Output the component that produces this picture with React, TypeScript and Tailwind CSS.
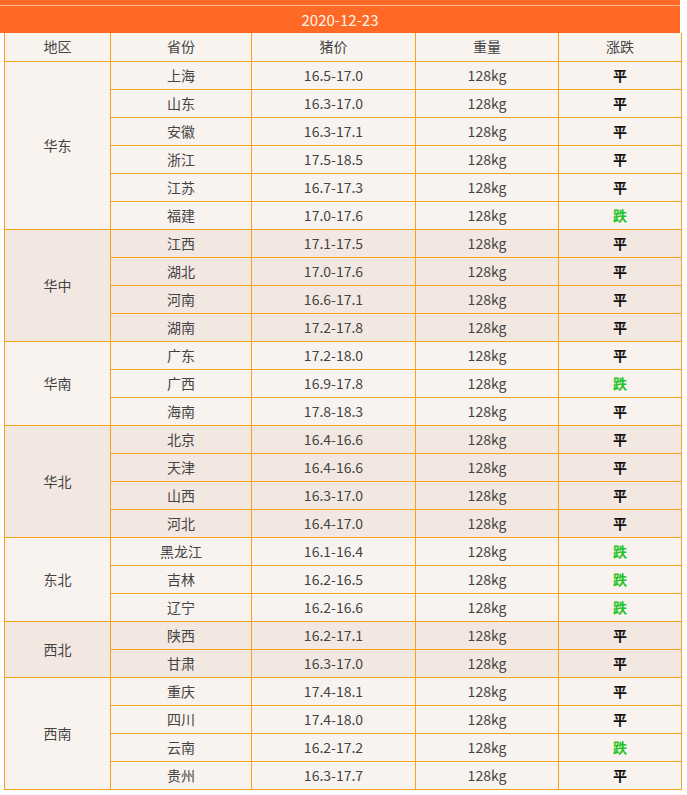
import React from 'react'

type Row = { province: string; price: string; trend: '平' | '跌' }
type Region = { name: string; shaded: boolean; rows: Row[] }

const regions: Region[] = [
  {
    name: '华东',
    shaded: false,
    rows: [
      { province: '上海', price: '16.5-17.0', trend: '平' },
      { province: '山东', price: '16.3-17.0', trend: '平' },
      { province: '安徽', price: '16.3-17.1', trend: '平' },
      { province: '浙江', price: '17.5-18.5', trend: '平' },
      { province: '江苏', price: '16.7-17.3', trend: '平' },
      { province: '福建', price: '17.0-17.6', trend: '跌' },
    ],
  },
  {
    name: '华中',
    shaded: true,
    rows: [
      { province: '江西', price: '17.1-17.5', trend: '平' },
      { province: '湖北', price: '17.0-17.6', trend: '平' },
      { province: '河南', price: '16.6-17.1', trend: '平' },
      { province: '湖南', price: '17.2-17.8', trend: '平' },
    ],
  },
  {
    name: '华南',
    shaded: false,
    rows: [
      { province: '广东', price: '17.2-18.0', trend: '平' },
      { province: '广西', price: '16.9-17.8', trend: '跌' },
      { province: '海南', price: '17.8-18.3', trend: '平' },
    ],
  },
  {
    name: '华北',
    shaded: true,
    rows: [
      { province: '北京', price: '16.4-16.6', trend: '平' },
      { province: '天津', price: '16.4-16.6', trend: '平' },
      { province: '山西', price: '16.3-17.0', trend: '平' },
      { province: '河北', price: '16.4-17.0', trend: '平' },
    ],
  },
  {
    name: '东北',
    shaded: false,
    rows: [
      { province: '黑龙江', price: '16.1-16.4', trend: '跌' },
      { province: '吉林', price: '16.2-16.5', trend: '跌' },
      { province: '辽宁', price: '16.2-16.6', trend: '跌' },
    ],
  },
  {
    name: '西北',
    shaded: true,
    rows: [
      { province: '陕西', price: '16.2-17.1', trend: '平' },
      { province: '甘肃', price: '16.3-17.0', trend: '平' },
    ],
  },
  {
    name: '西南',
    shaded: false,
    rows: [
      { province: '重庆', price: '17.4-18.1', trend: '平' },
      { province: '四川', price: '17.4-18.0', trend: '平' },
      { province: '云南', price: '16.2-17.2', trend: '跌' },
      { province: '贵州', price: '16.3-17.7', trend: '平' },
    ],
  },
]

const cell = 'border border-[#f6a21c] h-[28px] p-0 text-center align-middle'

export default function App() {
  return (
    <div
      className="w-[687px] h-[795px] bg-white text-[14px] text-[#444]"
      style={{ fontFamily: '"Noto Sans CJK SC", "Microsoft YaHei", sans-serif' }}
    >
      {/* date banner */}
      <div className="w-[680px] h-[33px] bg-[#fe6926] flex flex-col">
        <div className="h-[5px]" />
        <div className="h-px bg-[#fcb58f]" />
        <div className="flex-1 flex items-center justify-center text-[15px] text-[#fff4e8] leading-none">
          2020-12-23
        </div>
      </div>

      <table className="ml-[4px] w-[677px] table-fixed border-collapse">
        <colgroup>
          <col className="w-[106px]" />
          <col className="w-[141px]" />
          <col className="w-[164px]" />
          <col className="w-[143px]" />
          <col className="w-[123px]" />
        </colgroup>
        <thead>
          <tr className="bg-[#f8f3ef]">
            <th className={`${cell} font-normal border-t-0`}>地区</th>
            <th className={`${cell} font-normal border-t-0`}>省份</th>
            <th className={`${cell} font-normal border-t-0`}>猪价</th>
            <th className={`${cell} font-normal border-t-0`}>重量</th>
            <th className={`${cell} font-normal border-t-0`}>涨跌</th>
          </tr>
        </thead>
        <tbody>
          {regions.map((region) =>
            region.rows.map((row, idx) => (
              <tr
                key={row.province}
                className={region.shaded ? 'bg-[#f3e7e1]' : 'bg-[#f8f3ef]'}
              >
                {idx === 0 && (
                  <td className={cell} rowSpan={region.rows.length}>
                    {region.name}
                  </td>
                )}
                <td className={cell}>{row.province}</td>
                <td className={cell}>{row.price}</td>
                <td className={cell}>128kg</td>
                <td className={cell}>
                  {row.trend === '平' ? (
                    <span className="font-bold text-[#111]">平</span>
                  ) : (
                    <span className="font-bold text-[#21c221]">跌</span>
                  )}
                </td>
              </tr>
            ))
          )}
        </tbody>
      </table>
    </div>
  )
}
